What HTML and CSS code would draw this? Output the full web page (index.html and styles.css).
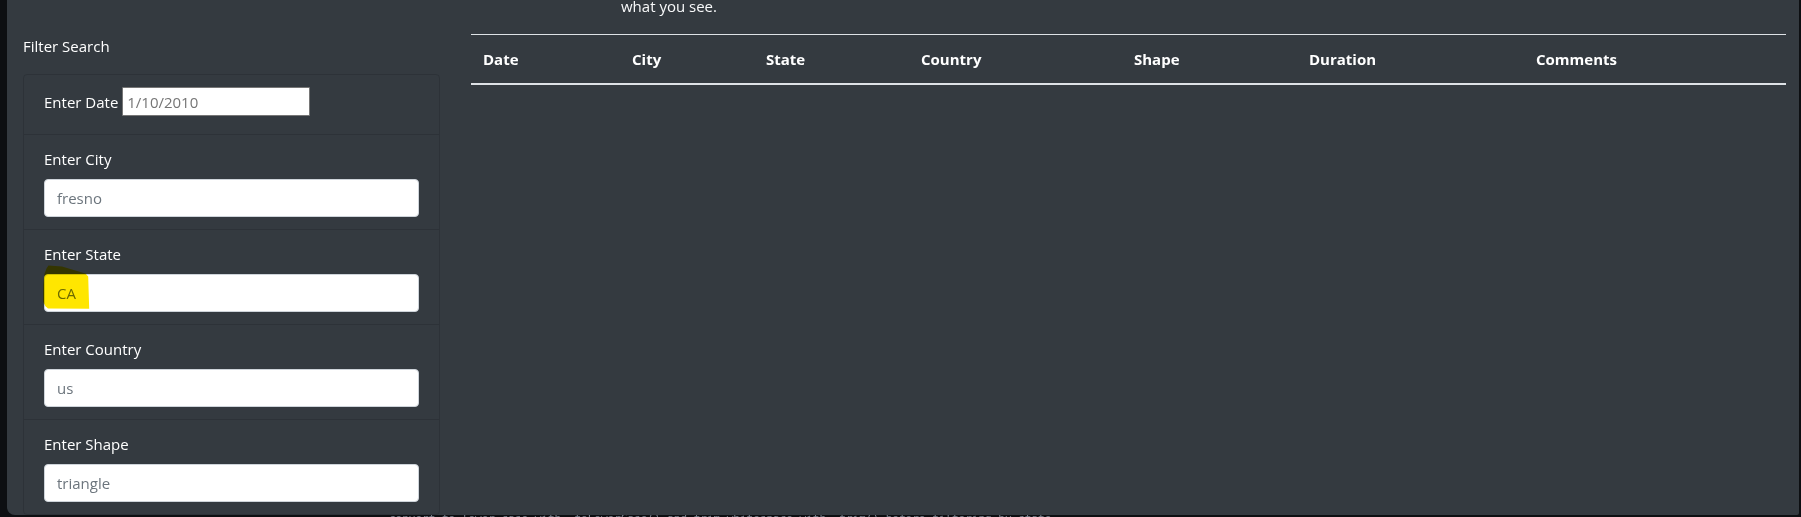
FILE: index.html
```html
<!DOCTYPE html>
<html lang="en">
<head>
<meta charset="utf-8">
<title>UFO Sightings</title>
<link rel="stylesheet" href="styles.css">
</head>
<body>
<div class="screen">
  <div class="window">
    <p class="intro">what you see.</p>
    <div class="row">
      <aside class="col-side">
        <p class="filter-title">Filter Search</p>
        <div class="card">
          <ul class="list-group">
            <li class="item"><label for="datetime">Enter Date</label> <input class="date-input" id="datetime" type="text" placeholder="1/10/2010"></li>
            <li class="item"><label for="city">Enter City</label><input class="form-control" id="city" type="text" placeholder="fresno"></li>
            <li class="item"><label for="state">Enter State</label>
              <div class="field">
                <input class="form-control" id="state" type="text" placeholder="CA">
                <svg class="marker" viewBox="0 0 50 46" aria-hidden="true"><path d="M6.5 0.6 L20 1.4 L43.5 8.4 L46.2 11.5 L46.6 25 L47.2 43.8 L6 43.6 L3.4 41.2 L1 36.5 L1.2 20 L2.4 9 L4.6 3.2 Z" fill="#ffe600"/></svg>
              </div>
            </li>
            <li class="item"><label for="country">Enter Country</label><input class="form-control" id="country" type="text" placeholder="us"></li>
            <li class="item"><label for="shape">Enter Shape</label><input class="form-control" id="shape" type="text" placeholder="triangle"></li>
          </ul>
        </div>
      </aside>
      <main class="col-main">
        <table class="table">
          <colgroup>
            <col class="c-date"><col class="c-city"><col class="c-state"><col class="c-country"><col class="c-shape"><col class="c-duration"><col class="c-comments">
          </colgroup>
          <thead>
            <tr><th>Date</th><th>City</th><th>State</th><th>Country</th><th>Shape</th><th>Duration</th><th>Comments</th></tr>
          </thead>
          <tbody></tbody>
        </table>
      </main>
    </div>
  </div>
  <div class="terminal"><span class="term-line">convert to lower case with .toLowerCase() and trim whitespace with .trim() before filtering by state</span></div>
</div>
</body>
</html>
```
FILE: styles.css
```css
* { box-sizing: border-box; }

html, body {
  margin: 0;
  height: 100%;
}

body {
  background: #0d0f12;
  color: #fff;
  font-family: "Open Sans", "Noto Sans", sans-serif;
  font-size: 15px;
  line-height: 24px;
  overflow: hidden;
}

.screen {
  width: 1801px;
  height: 517px;
  display: flex;
  flex-direction: column;
}

.window {
  flex: none;
  margin-left: 7px;
  width: 1792px;
  height: 515px;
  background: #343a40;
  border-bottom-left-radius: 8px;
  border-bottom-right-radius: 2px;
  overflow: hidden;
}

.intro {
  margin: -6px 0 0;
  padding-left: 614px;
  color: #f8f9fa;
}

.row {
  display: flex;
  margin-top: 16px;
}

.col-side {
  flex: none;
  width: 448px;
  padding: 0 15px 0 16px;
}

.col-main {
  flex: 1;
  padding: 0 13px 0 16px;
}

.filter-title {
  margin: 0 0 16px;
}

.card {
  border: 1px solid rgba(0, 0, 0, 0.125);
  border-radius: 4px;
}

.list-group {
  list-style: none;
  margin: 0;
  padding: 0;
}

.item {
  padding: 12px 20px;
  border-bottom: 1px solid rgba(0, 0, 0, 0.125);
}

.item:last-child {
  border-bottom: 0;
}

.item label {
  display: inline-block;
  margin-bottom: 8px;
}

.date-input {
  width: 188px;
  height: 29px;
  padding: 1px 4px;
  font-family: inherit;
  font-size: 15px;
  line-height: normal;
  color: #333;
  background: #fff;
  border: 1px solid #767676;
  border-radius: 1px;
}

.date-input::placeholder {
  color: #757575;
  opacity: 1;
}

.form-control {
  display: block;
  width: 100%;
  height: 38px;
  padding: 6px 12px;
  font-family: inherit;
  font-size: 15px;
  line-height: 24px;
  color: #495057;
  background: #fff;
  border: 1px solid #ced4da;
  border-radius: 4px;
}

.form-control::placeholder {
  color: #6c757d;
  opacity: 1;
}

.field {
  position: relative;
}

.marker {
  position: absolute;
  left: -2px;
  top: -9px;
  width: 50px;
  height: 46px;
  mix-blend-mode: multiply;
  pointer-events: none;
}

.table {
  width: 100%;
  border-collapse: collapse;
  table-layout: fixed;
}

.c-date { width: 149px; }
.c-city { width: 134px; }
.c-state { width: 155px; }
.c-country { width: 213px; }
.c-shape { width: 175px; }
.c-duration { width: 227px; }

.table th {
  padding: 12px;
  text-align: left;
  font-weight: 700;
  color: #fff;
  border-top: 1px solid #dee2e6;
  border-bottom: 2px solid #dee2e6;
}

.terminal {
  flex: none;
  height: 2px;
  overflow: hidden;
  padding-left: 389px;
  font-family: "DejaVu Sans Mono", monospace;
  font-size: 11px;
  line-height: 14px;
  color: #7d8590;
  white-space: nowrap;
}

.term-line {
  display: block;
  margin-top: -3px;
}
```
